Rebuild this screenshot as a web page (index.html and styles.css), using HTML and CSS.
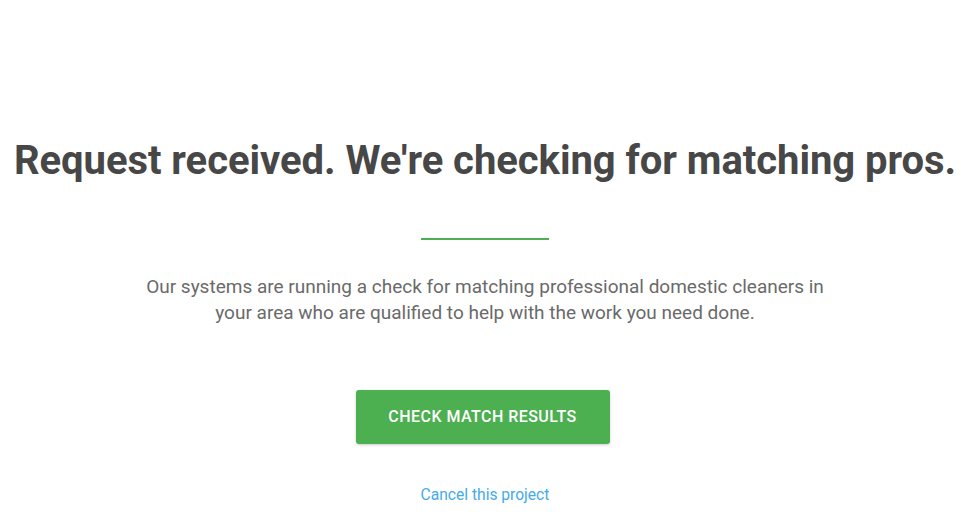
FILE: index.html
```html
<!DOCTYPE html>
<html lang="en">
<head>
  <meta charset="UTF-8">
  <meta name="viewport" content="width=device-width, initial-scale=1.0">
  <title>Request received</title>
  <link rel="stylesheet" href="styles.css">
</head>
<body>
  <section class="confirm">
    <h1>Request received. We're checking for matching pros.</h1>
    <div class="divider"></div>
    <p>Our systems are running a check for matching professional domestic cleaners in your area who are qualified to help with the work you need done.</p>
    <a class="btn" href="#results">Check match results</a>
    <a class="cancel" href="#cancel">Cancel this project</a>
  </section>
</body>
</html>
```

FILE: styles.css
```css
body {
  margin: 0;
  font-family: Roboto, "Liberation Sans", Arial, sans-serif;
  background-color: #ffffff;
  color: #444444;
}
.confirm {
  display: flex;
  flex-direction: column;
  align-items: center;
  text-align: center;
  padding: 136px 5px 0 0;
}
.confirm h1 {
  margin: 0;
  font-size: 40px;
  font-weight: 700;
  line-height: 50px;
  letter-spacing: -0.05px;
  color: #474747;
}
.divider {
  width: 128px;
  height: 2px;
  background-color: #4caf50;
  margin: 52px 0 0;
}
.confirm p {
  max-width: 700px;
  margin: 34px 0 0;
  font-size: 19px;
  line-height: 26px;
  color: #6a6a6a;
}
.btn {
  display: block;
  width: 254px;
  height: 54px;
  line-height: 54px;
  margin: 64px 5px 0 0;
  background-color: #4caf50;
  color: #ffffff;
  text-decoration: none;
  text-transform: uppercase;
  font-size: 16px;
  font-weight: 500;
  letter-spacing: 0.45px;
  border-radius: 3px;
  box-shadow: 0 1px 3px rgba(0, 0, 0, 0.2);
}
.cancel {
  margin: 42px 0 0;
  font-size: 15.6px;
  color: #45abe8;
  text-decoration: none;
}
```
